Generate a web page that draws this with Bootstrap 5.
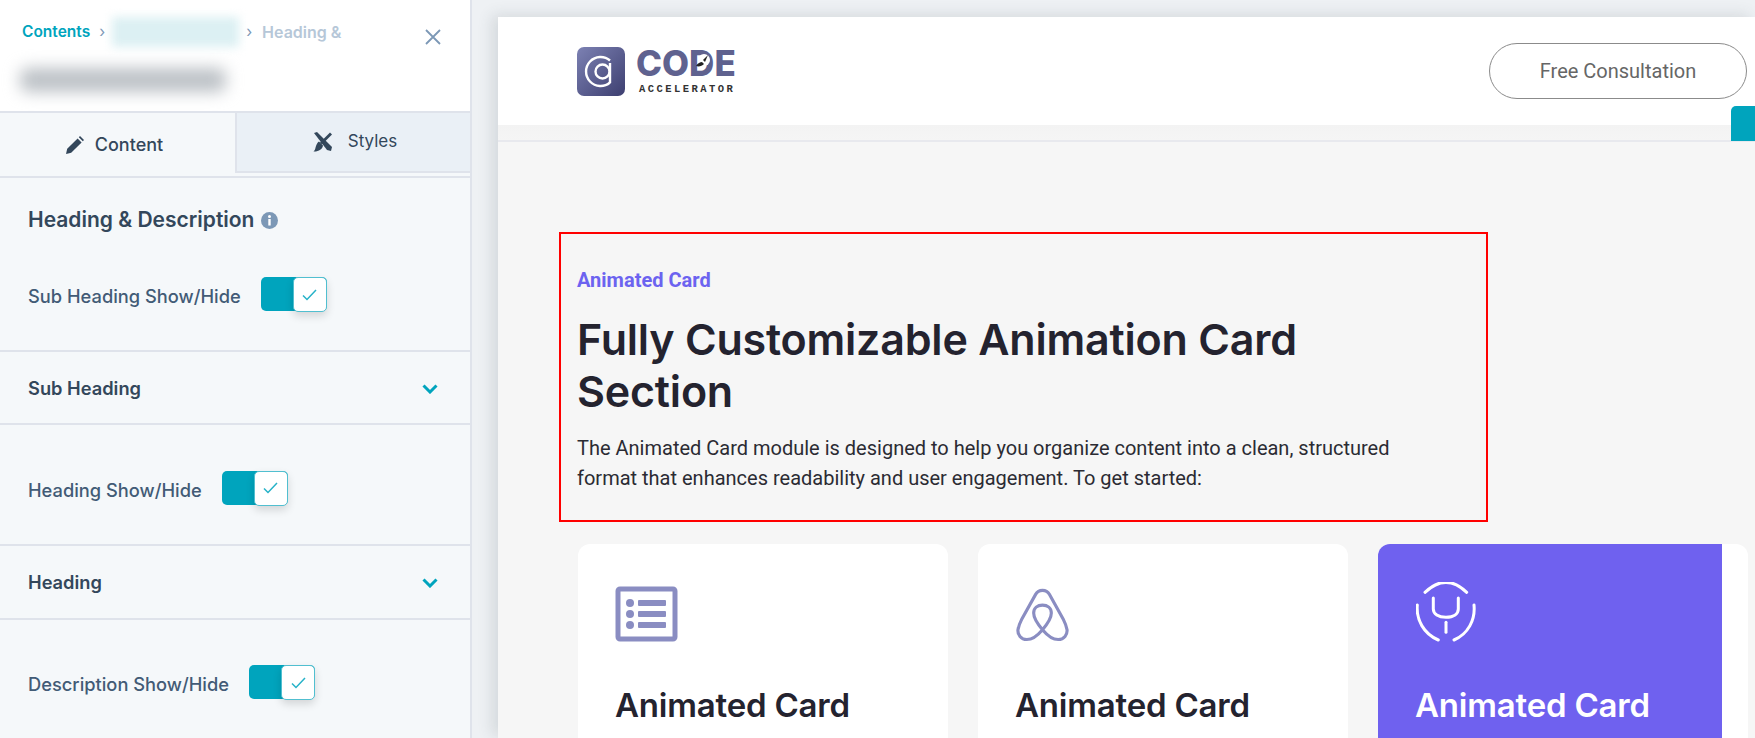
<!DOCTYPE html>
<html lang="en">
<head>
    <meta charset="UTF-8">
    <title>Animated Card</title>
    <link href="https://cdn.jsdelivr.net/npm/bootstrap@5.3.3/dist/css/bootstrap.min.css" rel="stylesheet">
    <script src="https://cdn.jsdelivr.net/npm/bootstrap@5.3.3/dist/js/bootstrap.bundle.min.js"></script>
    <style>
        html, body { height: 738px; overflow: hidden; }
        body { background: #eef1f4; font-family: "Inter", "Liberation Sans", sans-serif; }
        .shell { height: 738px; }

        /* left editor panel */
        .side { width: 472px; flex: none; background: #f5f8fa; border-right: 2px solid #dfe3eb; color: #33475b; }
        .side-top { height: 113px; background: #fff; border-bottom: 2px solid #dfe3eb; padding: 17px 22px 0; }
        .crumbs { font-size: 15.5px; font-weight: 600; gap: 9px; width: 360px; line-height: 20px; }
        .crumb-link { color: #00a4bd; }
        .crumb-last { color: #b6c7d8; font-size: 16px; margin-left: 1px; }
        .crumb-sep { color: #7c98b6; font-weight: 400; }
        .blur-a { width: 127px; height: 30px; background: #dcf0f3; filter: blur(5px); margin-left: -2px; margin-right: -2px; }
        .blur-b { width: 206px; height: 24px; background: #bcc1c6; filter: blur(8px); margin: 21px 0 0 -2px; border-radius: 8px; }
        .close-x { position: absolute; top: 29px; right: 29px; }
        .tabs-row { height: 65px; border-bottom: 2px solid #dfe3eb; }
        .tab-a { width: 50%; font-size: 18px; gap: 11px; font-weight: 500; padding-right: 6px; }
        .tab-b { width: 50%; font-size: 17px; background: #eaf0f6; height: 60px; border-left: 2px solid #dfe3eb; border-bottom: 2px solid #dfe3eb; font-weight: 400; gap: 15px; padding-left: 3px; }
        .block-title { font-size: 21px; font-weight: 600; padding: 26px 28px 0; height: 72px; gap: 7px; }
        .opt-label { font-size: 18.3px; font-weight: 500; color: #425b76; }
        .toggle-row { padding-left: 28px; gap: 20px; }
        .toggle-one { height: 102px; padding-bottom: 6px; border-bottom: 2px solid #dfe3eb; }
        .toggle-two { height: 121px; padding-top: 12px; border-bottom: 2px solid #dfe3eb; }
        .toggle-three { height: 132px; padding-bottom: 2px; }
        .acc-row { height: 73px; padding: 3px 32px 0 28px; border-bottom: 2px solid #dfe3eb; font-size: 18.3px; font-weight: 600; }
        .acc-row-b { height: 74px; padding-top: 1px; }
        .switcher { width: 66px; height: 34px; background: #00a4bd; border-radius: 5px; justify-content: flex-end; margin-top: -6px; }
        .switcher-knob { width: 34px; height: 35px; background: #fff; border: 1px solid #51bfd0; border-radius: 5px; box-shadow: 0 4px 9px rgba(0,0,0,.14); }

        /* website preview */
        .preview-wrap { padding: 17px 0 0 26px; min-width: 0; }
        .preview { background: #f6f6f6; height: 721px; box-shadow: -6px -2px 14px rgba(60,70,80,.14); overflow: hidden; }
        .site-head { height: 125px; background: linear-gradient(#fff 108px, #f3f3f3 108px, #f5f5f5 123px); border-bottom: 2px solid #e8e9ee; padding: 30px 8px 0 79px; }
        .logo-word { line-height: 1; margin-left: 11px; }
        .logo-code { font-size: 35px; font-weight: 800; color: #5f628f; letter-spacing: 0; line-height: 32px; height: 34px; }
        .logo-d { position: relative; display: inline-block; }
        .logo-rocket { position: absolute; left: 6px; top: 5px; }
        .logo-sub { font-size: 10.5px; font-weight: 600; color: #333; letter-spacing: 2.45px; margin-top: 3px; padding-left: 3px; font-family: "Liberation Mono", monospace; }
        .consult { width: 258px; height: 56px; border: 1.5px solid #8b8b8b; border-radius: 28px; color: #666; font: 400 20px "Roboto", sans-serif; background: #fff; margin-top: -4px; }
        .teal-tab { position: absolute; right: 0; top: 89px; width: 24px; height: 35px; background: #00a4bd; border-radius: 5px 0 0 0; }
        .red-box { width: 929px; height: 290px; margin: 90px 0 22px 61px; border: 2px solid #f00; padding: 35px 16px 0; font-family: "Roboto", sans-serif; }
        .eyebrow { font-size: 20px; font-weight: 700; color: #6c63f0; line-height: 22px; }
        .main-title { font: 600 43px/52px "Inter", sans-serif; color: #24232f; margin: 22px 0 16px; max-width: 800px; letter-spacing: -.2px; }
        .intro { font-size: 20px; line-height: 30px; color: #2b2b33; margin: 0; width: 850px; }
        .cards-row { margin-left: 80px; gap: 30px; }
        .tile { width: 370px; height: 300px; background: #fff; border-radius: 12px; overflow: hidden; flex: none; padding: 42px 37px; }
        .tile-name { font: 600 33px/36px "Inter", sans-serif; color: #24232f; margin: 45px 0 0; letter-spacing: -.2px; }
        .tile-third { padding: 0; }
        .tile-fill { width: 344px; height: 100%; background: #6f61ef; padding: 38px 37px; }
        .tile-fill .tile-name { color: #fff; }
        .air-icon { margin-left: 1px; }
        .stetho-icon { margin-left: 1px; }
    </style>
</head>
<body>

<div class="shell d-flex">
    <aside class="side">
        <div class="side-top position-relative">
            <div class="crumbs d-flex align-items-center">
                <span class="crumb-link">Contents</span>
                <span class="crumb-sep">&#8250;</span>
                <span class="blur-a"></span>
                <span class="crumb-sep">&#8250;</span>
                <span class="crumb-last">Heading &amp;</span>
            </div>
            <div class="blur-b"></div>
            <svg class="close-x" width="16" height="16" viewBox="0 0 16 16"><path d="M1 1l14 14M15 1L1 15" stroke="#7c98b6" stroke-width="1.8" fill="none"/></svg>
        </div>

        <div class="tabs-row d-flex align-items-start">
            <div class="tab-a d-flex align-items-center justify-content-center h-100">
                <svg width="18" height="18" viewBox="0 0 18 18"><path d="M0 18l1.2-5.2L11.6 2.4l4 4L5.2 16.8z M12.8 1.2L14 0l4 4-1.2 1.2z" fill="#33475b"/></svg>
                <span>Content</span>
            </div>
            <div class="tab-b d-flex align-items-center justify-content-center">
                <svg width="20" height="20" viewBox="0 0 20 20"><path d="M1 1l3-1 15 15-1 4-4-1z" fill="#33475b"/><path d="M17 0.500l2 2L9 12.500l-2-2z" fill="#33475b"/><path d="M6 9.500l4 4c-.5 3.800-4.500 6.300-9.500 6 2-1.500 1.800-3.800 2.500-5.500.6-1.800 1.500-3.500 3-4.500z" fill="#33475b"/></svg>
                <span>Styles</span>
            </div>
        </div>

        <div class="block-title d-flex align-items-start">
            <span>Heading &amp; Description</span>
            <svg class="mt-2" width="17" height="17" viewBox="0 0 17 17"><circle cx="8.500" cy="8.500" r="8.500" fill="#7c98b6"/><rect x="7.300" y="7" width="2.400" height="6.500" fill="#fff"/><circle cx="8.500" cy="4.600" r="1.500" fill="#fff"/></svg>
        </div>

        <div class="toggle-row toggle-one d-flex align-items-center">
            <span class="opt-label">Sub Heading Show/Hide</span>
            <div class="switcher d-flex">
                <div class="switcher-knob d-flex align-items-center justify-content-center">
                    <svg width="15" height="12" viewBox="0 0 15 12"><path d="M1 6.500l4 4L14 1" stroke="#26b2c8" stroke-width="1.500" fill="none"/></svg>
                </div>
            </div>
        </div>
        <div class="acc-row d-flex align-items-center justify-content-between">
            <span>Sub Heading</span>
            <svg width="16" height="10" viewBox="0 0 16 10"><path d="M1.500 1.500L8 8l6.500-6.500" stroke="#00a4bd" stroke-width="3" fill="none"/></svg>
        </div>
        <div class="toggle-row toggle-two d-flex align-items-center">
            <span class="opt-label">Heading Show/Hide</span>
            <div class="switcher d-flex">
                <div class="switcher-knob d-flex align-items-center justify-content-center">
                    <svg width="15" height="12" viewBox="0 0 15 12"><path d="M1 6.500l4 4L14 1" stroke="#26b2c8" stroke-width="1.500" fill="none"/></svg>
                </div>
            </div>
        </div>
        <div class="acc-row acc-row-b d-flex align-items-center justify-content-between">
            <span>Heading</span>
            <svg width="16" height="10" viewBox="0 0 16 10"><path d="M1.500 1.500L8 8l6.500-6.500" stroke="#00a4bd" stroke-width="3" fill="none"/></svg>
        </div>
        <div class="toggle-row toggle-three d-flex align-items-center">
            <span class="opt-label">Description Show/Hide</span>
            <div class="switcher d-flex">
                <div class="switcher-knob d-flex align-items-center justify-content-center">
                    <svg width="15" height="12" viewBox="0 0 15 12"><path d="M1 6.500l4 4L14 1" stroke="#26b2c8" stroke-width="1.500" fill="none"/></svg>
                </div>
            </div>
        </div>
    </aside>

    <main class="preview-wrap flex-grow-1">
        <div class="preview position-relative">
            <header class="site-head d-flex justify-content-between align-items-start">
                <div class="d-flex">
                    <svg width="48" height="49" viewBox="0 0 48 49">
                        <defs><linearGradient id="logoG" x1="0" y1="0" x2="1" y2="1"><stop offset="0" stop-color="#7c81b3"/><stop offset="1" stop-color="#3d3f70"/></linearGradient></defs>
                        <rect width="48" height="49" rx="7" fill="url(#logoG)"/>
                        <path d="M33 13.500A14.500 14.500 0 1 0 33 35.500" stroke="#fff" stroke-width="2.400" fill="none"/>
                        <circle cx="25.500" cy="24.500" r="7" stroke="#fff" stroke-width="2.400" fill="none"/>
                        <path d="M33 16v20" stroke="#fff" stroke-width="2.400"/>
                    </svg>
                    <div class="logo-word">
                        <div class="logo-code">CO<span class="logo-d">D<svg class="logo-rocket" width="17" height="16" viewBox="0 0 17 16"><circle cx="9" cy="8" r="6" fill="#fff"/><path d="M1 14c2-3 4-4 6-4l2 2c-2 2-5 3-8 2z" fill="#222"/><path d="M13 3L8 8l2 2z" fill="#222"/></svg></span>E</div>
                        <div class="logo-sub">ACCELERATOR</div>
                    </div>
                </div>
                <button type="button" class="btn consult">Free Consultation</button>
            </header>
            <div class="teal-tab"></div>

            <section class="red-box">
                <div class="eyebrow">Animated Card</div>
                <h1 class="main-title">Fully Customizable Animation Card Section</h1>
                <p class="intro">The Animated Card module is designed to help you organize content into a clean, structured format that enhances readability and user engagement. To get started:</p>
            </section>

            <div class="cards-row d-flex">
                <div class="tile">
                    <svg class="d-block" width="63" height="56" viewBox="0 0 63 56">
                        <rect x="3" y="3" width="57" height="50" rx="2" fill="none" stroke="#8a8dc2" stroke-width="5"/>
                        <circle cx="15" cy="17" r="4" fill="#8a8dc2"/><circle cx="15" cy="28" r="4" fill="#8a8dc2"/><circle cx="15" cy="39" r="4" fill="#8a8dc2"/>
                        <rect x="23" y="14" width="28" height="6" rx="1" fill="#8a8dc2"/><rect x="23" y="25" width="28" height="6" rx="1" fill="#8a8dc2"/><rect x="23" y="36" width="28" height="6" rx="1" fill="#8a8dc2"/>
                    </svg>
                    <h3 class="tile-name">Animated Card</h3>
                </div>
                <div class="tile">
                    <svg class="d-block air-icon" width="53" height="56" viewBox="0 0 54 56">
                        <path d="M27 44C22 50 17 54 11 54 5 54 1.500 49 2 44 2.500 41 4 37 6 33L20 8C23 2.500 31 2.500 34 8L48 33C50 37 51.500 41 52 44 52.500 49 49 54 43 54 37 54 32 50 27 44 21 37 18 31 18 27 18 22 22 19 27 19 32 19 36 22 36 27 36 31 33 37 27 44Z" fill="none" stroke="#8a8dc2" stroke-width="3.200"/>
                    </svg>
                    <h3 class="tile-name">Animated Card</h3>
                </div>
                <div class="tile tile-third">
                    <div class="tile-fill">
                        <svg class="d-block stetho-icon" width="60" height="60" viewBox="0 0 60 60" fill="none" stroke="#fff" stroke-width="3" stroke-linecap="round">
                            <path d="M9 10.300Q30-9.700 50.700 10.300"/>
                            <path d="M1.300 23C0 38 8 52 22.300 58"/>
                            <path d="M58 23C59.500 38 52 52 38 58"/>
                            <path d="M17.300 16v11c0 5 5 8.300 12.700 8.300s12.300-3.300 12.300-8.300V16"/>
                            <path d="M30 40.300v10"/>
                        </svg>
                        <h3 class="tile-name">Animated Card</h3>
                    </div>
                </div>
            </div>
        </div>
    </main>
</div>

</body>
</html>
